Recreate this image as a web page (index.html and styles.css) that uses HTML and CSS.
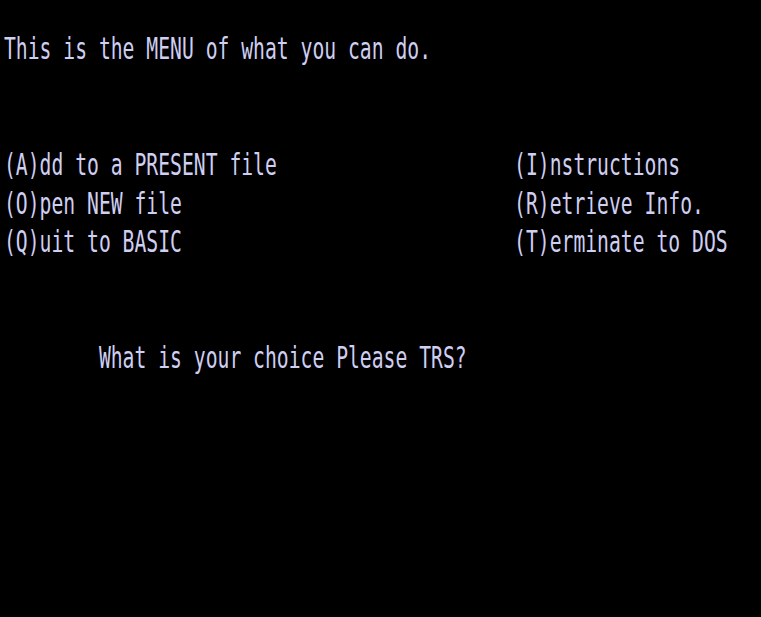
FILE: index.html
```html
<!DOCTYPE html>
<html lang="en">
<head>
<meta charset="utf-8">
<title>TRS Menu</title>
<link rel="stylesheet" href="styles.css">
</head>
<body>
<main class="screen">
<pre class="terminal">This is the MENU of what you can do.


(A)dd to a PRESENT file                    (I)nstructions
(O)pen NEW file                            (R)etrieve Info.
(Q)uit to BASIC                            (T)erminate to DOS


        What is your choice Please TRS?</pre>
</main>
</body>
</html>
```

FILE: styles.css
```css
html, body {
  margin: 0;
  padding: 0;
  background: #000;
  width: 761px;
  height: 617px;
  overflow: hidden;
}

.screen {
  width: 761px;
  height: 617px;
  background: #000;
  padding-top: 30px;
  padding-left: 4px;
  box-sizing: border-box;
}

.terminal {
  margin: 0;
  font-family: "DejaVu Sans Mono", "Liberation Mono", monospace;
  font-size: 19.72px;
  line-height: 25.3px;
  color: #cfcff2;
  white-space: pre;
  transform: scaleY(1.53);
  transform-origin: top left;
}
```
